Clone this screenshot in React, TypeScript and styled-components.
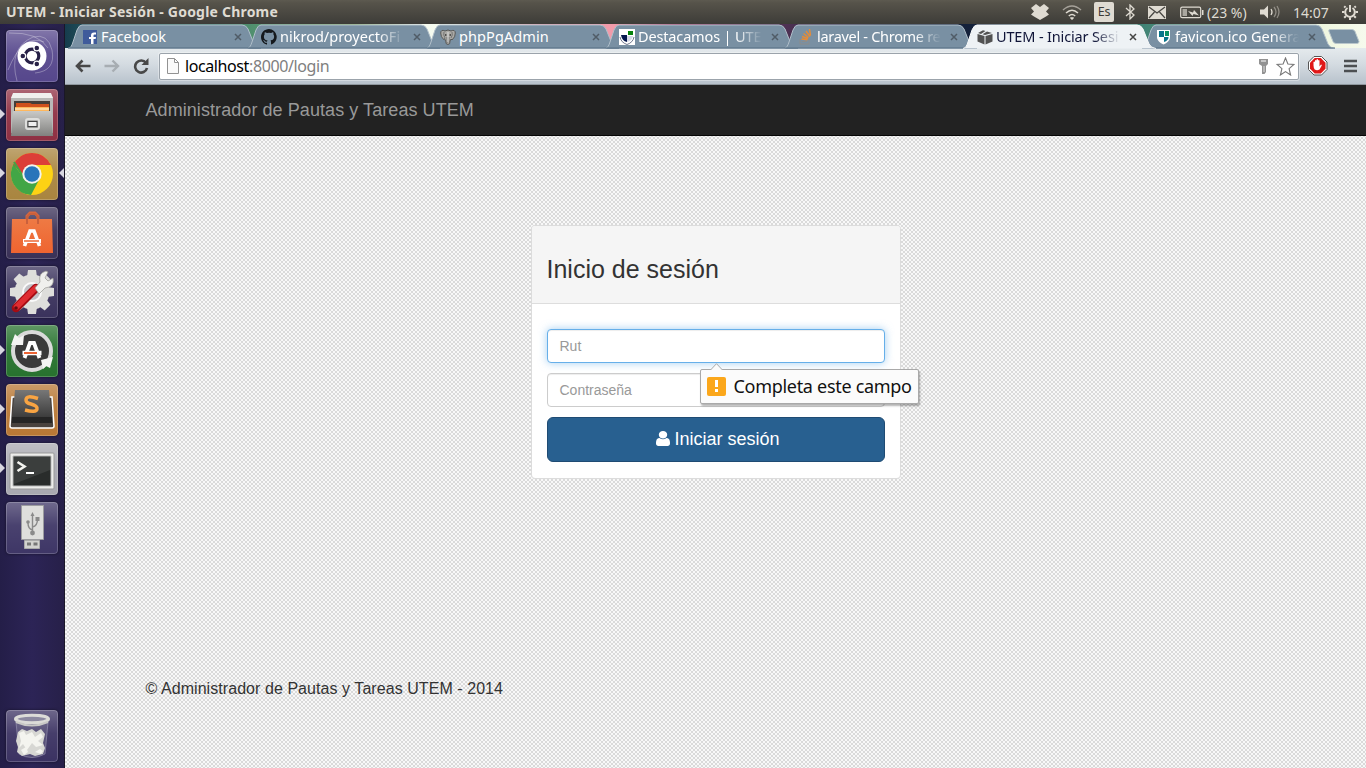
import React from "react";
import styled, { createGlobalStyle } from "styled-components";

const Global = createGlobalStyle`
  * { box-sizing: border-box; }
  html, body { margin: 0; padding: 0; overflow: hidden; }
  svg { display: block; flex: none; }
`;
const ubuntu = '"Noto Sans", "Open Sans", sans-serif';
const arial = '"Liberation Sans", Arial, sans-serif';

const Desktop = styled.div`
  width: 1366px; height: 768px; display: flex; flex-direction: column;
  font-family: ${ubuntu}; overflow: hidden;
`;
const TopBar = styled.header`
  height: 24px; flex: none; display: flex; align-items: center; justify-content: space-between;
  padding: 0 8px 0 6px; color: #dfdbd2;
  background: linear-gradient(#5d5a50, #56534a 12%, #3d3c38);
`;
const WindowTitle = styled.div`
  font-size: 14px; font-weight: 700; letter-spacing: 0.21px; line-height: 24px; white-space: nowrap;
`;
const Indicators = styled.div`
  display: flex; align-items: center; height: 24px; font-size: 14px;
`;
const Indicator = styled.div<{ $gap?: number; $w?: number }>`
  display: flex; align-items: center; margin-left: ${p => p.$gap ?? 0}px; width: ${p => p.$w ? p.$w + "px" : "auto"};
  white-space: nowrap;
`;
const Lang = styled.div`
  width: 20px; height: 20px; background: #dfdbd2; color: #3d3c38; border-radius: 2px;
  font-size: 12.5px; line-height: 20px; text-align: center; letter-spacing: -0.3px;
`;
const Workspace = styled.div`display: flex; flex: 1; min-height: 0;`;
const Launcher = styled.nav`
  width: 65px; flex: none; display: flex; flex-direction: column; align-items: center; gap: 7px;
  padding: 6px 1px 6px 0; border-right: 1px solid #1a1728;
  background: linear-gradient(90deg, #241e48, #2c2456 50%, #272049);
`;
const Tile = styled.div<{ $bg: string; $last?: boolean }>`
  position: relative; width: 52px; height: 52px; flex: none; border-radius: 4px;
  margin-top: ${p => (p.$last ? "auto" : "0")};
  background: linear-gradient(rgba(255,255,255,.26), rgba(255,255,255,.06) 45%, rgba(255,255,255,0)), ${p => p.$bg};
  box-shadow: inset 0 0 0 1px rgba(255,255,255,.2), 0 0 3px rgba(0,0,0,.5);
`;
const Pip = styled.i<{ $right?: boolean }>`
  position: absolute; top: 20px; ${p => (p.$right ? "right: -6px" : "left: -6px")};
  border: 5px solid transparent; border-width: 5px ${p => (p.$right ? "5px 5px 0" : "0 5px 5px")};
  ${p => (p.$right ? "border-right-color: #d8d6e0" : "border-left-color: #d8d6e0")};
`;
const Browser = styled.section`flex: 1; min-width: 0; display: flex; flex-direction: column;`;
const TabStrip = styled.div`
  height: 24px; flex: none; display: flex; padding-left: 3px;
  background: linear-gradient(90deg, #163c4d 0, #2a6264 40px, #3f7d6c 150px, #57966f 200px, #8fb070 290px, #f5fbf0 350px, #f6faef 390px, #e99dab 480px, #f29baa 550px, #b13b68 610px, #60375c 690px, #3d2b4b 750px, #152136 830px, #14213b 910px, #2e685e 1020px, #418376 1080px, #6fa76f 1180px, #eef6de 1250px, #f6faed 1301px);
`;
const TabBox = styled.div<{ $active?: boolean }>`
  position: relative; width: 193px; height: 24px; margin-right: -14px; flex: none; display: flex; align-items: center;
  z-index: ${p => (p.$active ? 2 : 1)}; padding: 2px 19px 0 14px;
`;
const TabShape = styled.svg`position: absolute; left: 0; top: 0; z-index: -1;`;
const TabLabel = styled.span<{ $active?: boolean; $fade?: boolean; $sp?: number }>`
  flex: 1; min-width: 0; margin: 0 9px 2px 3px; white-space: nowrap;
  font-size: 14.5px; line-height: 22px; letter-spacing: ${p => p.$sp ?? 0}px;
  color: ${p => (p.$active ? "#101538" : "#fff")};
  ${p => p.$fade ? "mask-image: linear-gradient(90deg, #000 calc(100% - 26px), transparent);" : ""}
`;
const NewTab = styled.div`display: flex; align-items: flex-start; margin: 5px 0 0 21px;
  margin-left: 7px;`;
const Toolbar = styled.div`
  height: 37px; flex: none; display: flex; align-items: center; padding: 0 9px 0 10px;
  background: linear-gradient(#e5eaed, #d4dbe1 45%, #b8c2cc); border-bottom: 1px solid #8f979e;
`;
const NavIcons = styled.div`display: flex; align-items: center; gap: 13px; width: 84px;`;
const Omnibox = styled.div`
  width: 1140px; height: 27px; display: flex; align-items: center; background: #fff;
  border: 1px solid #9ba3ab; border-radius: 2px; box-shadow: 0 0 0 1px rgba(255,255,255,.35);
  padding: 0 3px 0 7px; margin-right: 9px;
`;
const Url = styled.div`
  flex: 1; margin-left: 6px; font-size: 16px; letter-spacing: -0.4px; line-height: 24px; color: #808080; white-space: nowrap;
  b { font-weight: 400; color: #000; }
`;
const StarIcon = styled.svg`margin-left: 6px;`;
const MenuIcon = styled.svg`margin-left: 16px;`;
const Page = styled.main`
  flex: 1; font-family: ${arial}; display: flex; flex-direction: column; align-items: center;
  background: #ececec repeating-conic-gradient(#f8f8f8 0 25%, #dadada 0 50%) 0 0 / 4px 4px;
`;
const Navbar = styled.div`
  width: 100%; height: 51px; flex: none; background: #222; border-bottom: 1px solid #080808;
  padding-left: 80.5px; font-size: 18px; letter-spacing: 0.07px; line-height: 50px; color: #999;
`;
const Card = styled.div`
  width: 370px; height: 254px; margin-top: 89px; flex: none; background: #fff;
  border: 1px solid #dcdcdc; border-radius: 4px;
`;
const CardHead = styled.div`
  height: 78px; padding: 29px 15px 0; background: #f5f5f5; border-bottom: 1px solid #ddd; border-radius: 3px 3px 0 0;
`;
const Heading = styled.h3`margin: 0; font-size: 25px; line-height: 28px; font-weight: 400; color: #333;`;
const CardBody = styled.div`padding: 25px 15px 15px; display: flex; flex-direction: column; gap: 10px; position: relative;`;
const Field = styled.div<{ $focus?: boolean }>`
  height: 34px; padding: 0 12px; border-radius: 4px; background: #fff; font-size: 14px; line-height: 32px; color: #999;
  border: 1px solid ${p => (p.$focus ? "#66afe9" : "#ccc")};
  box-shadow: inset 0 1px 1px rgba(0,0,0,.075)${p => (p.$focus ? ", 0 0 8px rgba(102,175,233,.6)" : "")};
`;
const Submit = styled.div`
  height: 45px; border: 1px solid #1f4b73; border-radius: 6px; background: #286090; color: #fff;
  display: flex; align-items: center; justify-content: center; gap: 4px; font-size: 18px; line-height: 43px; padding-left: 5px;
`;
const UserIcon = styled.svg`margin-bottom: 2px;`;
const Bubble = styled.div`
  position: absolute; left: 168px; top: 65px; width: 219px; height: 35px; z-index: 4;
  display: flex; align-items: center; gap: 8px; padding: 0 7px 1px 6px; border: 1px solid #a9a9a9; border-radius: 2px;
  background: #fbfbfb; box-shadow: 1px 2px 2px rgba(0,0,0,.3);
  font-family: ${ubuntu}; font-size: 18px; letter-spacing: -0.3px; color: #111; white-space: nowrap;
`;
const BubbleTip = styled.svg`position: absolute; left: 9px; top: -7px;`;
const Warn = styled.div`
  width: 19px; height: 19px; flex: none; border-radius: 2px; background: #fba71b; display: flex; align-items: center; justify-content: center;
`;
const Footer = styled.footer`
  width: 100%; padding-left: 80.5px; margin-top: 199px; font-size: 16px; letter-spacing: 0.06px; line-height: 22px; color: #333;
`;

const Close = ({ active }: { active?: boolean }) => (
  <svg width="8" height="8" viewBox="0 0 8 8"><path d="M1 1l6 6M7 1L1 7" stroke={active ? "#444" : "#505c67"} strokeWidth="1.5" /></svg>
);
function Tab({ icon, label, active, fade, sp }: { icon: React.ReactNode; label: string; active?: boolean; fade?: boolean; sp?: number }) {
  return (
    <TabBox $active={active}>
      <TabShape width="193" height="25" viewBox="0 0 193 25">
        <path d="M0 24.500C3 24 4 21 5 18L9 6Q11 1 14 1H174Q178 1 180 5L186 20Q188 24 193 24.500Z" fill={active ? "#eef2f5" : "#7990a3"} />
        <path d="M0 24.500C3 24 4 21 5 18L9 6Q11 1 14 1H174Q178 1 180 5L186 20Q188 24 193 24.500" fill="none" stroke={active ? "#f7f9fa" : "#b1bfca"} />
        {!active && <path d="M0 24h193" stroke="#566f83" />}
      </TabShape>
      {icon}
      <TabLabel $active={active} $fade={fade} $sp={sp}>{label}</TabLabel>
      <Close active={active} />
    </TabBox>
  );
}

const FbIcon = () => <svg width="16" height="16" viewBox="0 0 16 16"><path fill="#3f5b9b" d="M1 1h14v14H1z" /><path fill="#fff" d="M9 15V10H7V8h2V6.500Q9 3.500 12 3.500h2v2h-1.500q-1 0-1 1V8H14l-.4 2h-2.100v5z" /></svg>;
const GhIcon = () => <svg width="16" height="16" viewBox="0 0 16 16"><path fill="#15191d" d="M8 0C3.580 0 0 3.580 0 8c0 3.540 2.290 6.530 5.470 7.590.4.070.55-.17.55-.38v-1.490C3.780 14.200 3.310 12.650 3.310 12.650c-.36-.92-.89-1.170-.89-1.170-.73-.49.05-.48.05-.48.8.06 1.230.83 1.230.83.72 1.230 1.890.87 2.340.67.07-.52.28-.87.51-1.080-1.780-.2-3.640-.89-3.640-3.960 0-.87.31-1.590.82-2.150-.08-.2-.36-1.020.08-2.120 0 0 .67-.21 2.200.82a7.600 7.600 0 0 1 4 0c1.530-1.030 2.200-.82 2.200-.82.44 1.100.16 1.920.08 2.120.51.56.82 1.280.82 2.150 0 3.080-1.870 3.760-3.650 3.960.29.25.54.73.54 1.480v2.200c0 .21.15.46.55.38A8 8 0 0 0 8 0z" /></svg>;
const PgIcon = () => <svg width="16" height="16" viewBox="0 0 16 16"><path fill="#aaa9a5" stroke="#50504f" strokeWidth=".9" d="M5 2Q1 0 .7 4q0 4 3 6.500l1-1 1 3q0 3 2.300 3t2-3.500l1-2 1 1Q15.500 8 15.300 4 15 0 11 2 8 0 5 2z" /><path stroke="#666" strokeWidth=".8" fill="none" d="M4 3q-1 3 1 6M12 3q1 3-1 6M7 8v6M9 8v5" /><path stroke="#ddd" d="M8 3v10" /><circle cx="5.800" cy="6" r=".7" /><circle cx="10.200" cy="6" r=".7" /></svg>;
const UtemShield = () => <svg width="16" height="16" viewBox="0 0 16 16"><path fill="#fff" d="M0 0h16v16H0z" /><path fill="#05174e" d="M2 6h6v7Q3 12 2 6z" /><path fill="#d5dae6" d="M8 7h6q-1 5-6 6z" /><path fill="#07820c" d="M9 2h5v4H9z" /><path d="M1 8q1 5.500 7 7.500 6-2 7-7.500" stroke="#4b5670" strokeWidth=".8" fill="none" /></svg>;
const SoIcon = () => <svg width="16" height="16" viewBox="0 0 16 16"><path d="M2 10v5h9v-5M4 12.500h5" fill="none" stroke="#8c8c8b" /><path d="M3.500 10l6 .8M4 7.500l6 2M5.500 4.500l5 4M8 2l4 5.500M11.500 0l1 6.500" stroke="#e88b34" strokeWidth="1.400" /></svg>;
const BoxIcon = () => <svg width="16" height="16" viewBox="0 0 16 16"><path fill="#525252" d="M.5 5l7 2v8.500l-7-3zM15.500 5l-7 2v8.500l7-3zM1 4l5-2.700 2.500.8L4 4.900zM5.500 5.200l4.500-2.700L15 4 8 6z" /></svg>;
const FavShield = () => <svg width="16" height="16" viewBox="0 0 16 16"><path fill="#fff" d="M1 1h13v8q-1 4-6.500 6.500Q2 13 1 9z" /><path fill="#08748b" d="M3 2h5v6H3zM8 8h4.500q0 3.500-4.500 5z" /><path fill="#0b9166" d="M9 2h4v5H9z" /></svg>;

const Id = {
  Ubuntu: () => <svg width="52" height="52" viewBox="0 0 52 52"><g fill="none" stroke="#fff" strokeOpacity=".3"><path d="M11 51Q2 18 27 7q15-4 19 13Q50 41 29 43M3 3q29-1 39 15" /><path d="M2 40Q17 3 38 12" /></g><circle cx="26" cy="26" r="14.500" fill="#fff" /><circle cx="26" cy="26" r="6.800" fill="none" stroke="#282147" strokeWidth="3.200" /><g fill="#282147" stroke="#fff" strokeWidth="1.300"><circle cx="16.800" cy="26" r="2.900" /><circle cx="30.800" cy="18" r="2.900" /><circle cx="30.800" cy="34" r="2.900" /></g></svg>,
  Files: () => <svg width="52" height="52" viewBox="0 0 52 52"><defs><linearGradient id="cab" x2="0" y2="1"><stop stopColor="#c9c9c7" /><stop offset="1" stopColor="#81817f" /></linearGradient></defs><path d="M8 4h36l3 5v35H5V9z" fill="#b9b9b7" /><path d="M7 4h38l2 5H5z" fill="#f0f0ee" /><path d="M8 12h36v11H8z" fill="#443d39" /><path d="M10 14h14l2 1h17v8H10z" fill="#cf501d" /><path d="M9 18h34v5H9z" fill="#ffb75c" /><path d="M9 20h34" stroke="#fff6de" /><path d="M7 22h38l2 25H5z" fill="url(#cab)" /><rect x="20" y="30" width="13" height="10" rx="2" fill="none" stroke="#dededc" strokeWidth="2" /><rect x="22" y="32.500" width="9" height="5" fill="#eee" stroke="#444" /></svg>,
  Chrome: () => <svg width="52" height="52" viewBox="0 0 52 52"><circle cx="26" cy="26" r="21" fill="#fdd214" /><path d="M7 17A21 21 0 0 1 45 17H26q-7 0-9 9z" fill="#dc3e38" /><path d="M7.500 16A21 21 0 0 0 25 47l9-17q-8 9-15 2z" fill="#42a646" /><path d="M8 14L18 30" stroke="#42a646" strokeWidth="2" /><circle cx="26" cy="26" r="9.700" fill="#f3f3ed" /><circle cx="26" cy="26" r="7.700" fill="#2875ba" /></svg>,
  Store: () => <svg width="52" height="52" viewBox="0 0 52 52"><defs><linearGradient id="bag" x2="0" y2="1"><stop stopColor="#ee7a44" /><stop offset="1" stopColor="#ef6430" /></linearGradient></defs><path d="M21 17V9l3-3h5l3 3v8" fill="none" stroke="#d8673f" strokeWidth="3" /><path d="M6 12h40l1 34H5z" fill="url(#bag)" /><path d="M21 17V10l3-3h5l3 3v7" stroke="#c9603c" strokeWidth="2" fill="none" /><path d="M18.500 39l5.500-15h4l5.500 15" stroke="#fff" strokeWidth="3.600" fill="none" /><path d="M17 34h18" stroke="#fff" strokeWidth="4" /><path d="M18 34h15" stroke="#ed6935" strokeWidth="1.500" /></svg>,
  Settings: () => <svg width="52" height="52" viewBox="0 0 52 52"><g fill="#dededb"><circle cx="26" cy="26" r="17.500" />{[0,45,90,135,180,225,270,315].map(a => <path key={a} transform={`rotate(${a} 26 26)`} d="M21 11l1-7h8l1 7z" />)}</g><circle cx="26" cy="26" r="9" fill="#c2c2c7" stroke="#fafafa" strokeWidth="2" /><path d="M10 42L30 22" stroke="#a50c13" strokeWidth="8.500" strokeLinecap="round" /><path d="M10.500 41L29.500 22" stroke="#df2c31" strokeWidth="5.500" strokeLinecap="round" /><path d="M29 22l5-6q-2-9 6-11l2 1-3 6 3 3 5-3q2 9-8 10l-6 6z" fill="#f0f0ed" stroke="#969691" strokeWidth=".7" /><circle cx="10" cy="42" r="1.800" fill="#650b11" /></svg>,
  Updater: () => <svg width="52" height="52" viewBox="0 0 52 52"><circle cx="26" cy="26" r="19" fill="#3a3a3a" stroke="#dadada" strokeWidth="4" /><path d="M5 20L9 9l4 4 5-3-1 10z" fill="#f4f4f3" /><path d="M35 35l12-3-3 11-4-2-3 3z" fill="#f4f4f3" /><path d="M18.500 33l5.500-15h4l5.500 15" fill="none" stroke="#fff" strokeWidth="3.800" /><path d="M16.500 28h19" stroke="#fff" strokeWidth="4.500" /><path d="M18 28h13" stroke="#ed6535" strokeWidth="2" /></svg>,
  Sublime: () => <svg width="52" height="52" viewBox="0 0 52 52"><defs><linearGradient id="sub" x2="0" y2="1"><stop stopColor="#777" /><stop offset="1" stopColor="#343434" /></linearGradient></defs><path d="M6 13h40l2 29q0 2-2 2H6q-2 0-2-2z" fill="#49423e" stroke="#fff" strokeWidth="1.500" /><path d="M9 6h34l3 31H6z" fill="url(#sub)" /><path d="M6 33h40v6H6z" fill="#252525" /><path d="M32 14.500q-12-4-12 1.500 0 3 5 4 7 2 6 5-1 4-12 1" fill="none" stroke="#f8a443" strokeWidth="3.500" /></svg>,
  Terminal: () => <svg width="52" height="52" viewBox="0 0 52 52"><rect x="4" y="10" width="44" height="36" rx="1" fill="#ededeb" stroke="#999" /><path d="M7 13h38v30H7z" fill="#292c2b" stroke="#bbb" /><path d="M8 14h36v13L8 41z" fill="#484b4a" opacity=".6" /><path d="M11.500 19l7 4.500-7 4.500" stroke="#f4f4f0" strokeWidth="2.600" fill="none" /><path d="M20 30h8" stroke="#fff" strokeWidth="2" /></svg>,
  Usb: () => <svg width="52" height="52" viewBox="0 0 52 52"><path d="M15.500 3.500h22v34h-22z" fill="#dededc" stroke="#9c9c9f" /><path d="M18.500 38.500h15v8h-15z" fill="#d2d2cf" stroke="#aaa" /><path d="M21 40.500h4v3h-4zm6.500 0h4v3h-4z" fill="#777" /><g fill="none" stroke="#8a8a8a" strokeWidth="1.400"><path d="M26.500 13v17M26.500 28q-4.500-1-4.500-7M26.500 25q5-1 5-8" /></g><g fill="#8a8a8a"><circle cx="26.500" cy="31" r="2.400" /><path d="M24.500 14l2-4 2 4zM29.500 15h4v4h-4z" /><circle cx="22" cy="20" r="1.800" /></g></svg>,
  Trash: () => <svg width="52" height="52" viewBox="0 0 52 52"><path d="M10 10h32l-3 34q-13 7-26 0z" fill="#b8b8c1" opacity=".18" /><path d="M10 12l3 32q13 7 26 0l3-32" fill="none" stroke="#a5a1bd" strokeWidth=".8" opacity=".7" /><path d="M12 22l4-3 5 2 5-2 4 3 5-3 4 5-2 9 2 5-2 6-8 2-5-2-8 2-5-4 1-5-2-6z" fill="#d7d7d3" /><path d="M13 23l5-2 2 4 6-3 3 5 6-4 2 4-5 4 5 4-7 2-4-4-5 7-4-6-4 4 2-7zM15 40l5-3 2 5-4 3zM29 42l5-3 3 2-2 3z" fill="#f4f4ef" /><ellipse cx="26" cy="9" rx="16.500" ry="3.800" fill="#8c89a0" stroke="#dcdcd8" strokeWidth="3" /><path d="M10 12q16 7 32 0" fill="none" stroke="#c9c9c6" strokeWidth="2" /></svg>,
};

const apps = [
  { I: Id.Ubuntu, bg: "#56478c" }, { I: Id.Files, bg: "#8f3043", l: true }, { I: Id.Chrome, bg: "#a9853f", l: true, r: true },
  { I: Id.Store, bg: "#3a3157" }, { I: Id.Settings, bg: "#3a325c" }, { I: Id.Updater, bg: "#27722e", l: true },
  { I: Id.Sublime, bg: "#b97835", l: true }, { I: Id.Terminal, bg: "#a9a9b1", l: true }, { I: Id.Usb, bg: "#3e3666" }, { I: Id.Trash, bg: "#3b3262", last: true },
];

export default function App() {
  return (
    <Desktop>
      <Global />
      <TopBar>
        <WindowTitle>UTEM - Iniciar Sesión - Google Chrome</WindowTitle>
        <Indicators>
          <Indicator><svg width="18" height="16" viewBox="0 0 18 16" fill="#dfdbd2"><path d="M5 0l4 3 4-3 5 4-3 3.500 3 3-3 2L9 16l-6-3.500-3-2 3-3L0 4z" /></svg></Indicator>
          <Indicator $gap={13}><svg width="20" height="16" viewBox="0 0 20 16" fill="none" stroke="#dfdbd2" strokeWidth="1.500"><path d="M1 6q9-8 18 0" opacity=".6" /><path d="M4 9q6-5.500 12 0M6.800 12q3.200-3 6.400 0" /><path d="M8.500 13.500L10 15l1.500-1.500" fill="#dfdbd2" /></svg></Indicator>
          <Indicator $gap={12}><Lang>Es</Lang></Indicator>
          <Indicator $gap={11}><svg width="10" height="16" viewBox="0 0 10 16" fill="none" stroke="#dfdbd2" strokeWidth="1.300"><path d="M1 4l8 7-4 4V1l4 4-8 7" /></svg></Indicator>
          <Indicator $gap={13}><svg width="18" height="13" viewBox="0 0 18 13"><path fill="#dfdbd2" d="M0 0h18v13H0z" /><path d="M1 1l8 6 8-6M1 12l5.500-6M17 12l-5.500-6" stroke="#464540" fill="none" strokeWidth="1.200" /></svg></Indicator>
          <Indicator $gap={14}><svg width="24" height="13" viewBox="0 0 24 13"><rect x=".7" y="1.200" width="20" height="10.500" rx="1.500" fill="none" stroke="#dfdbd2" strokeWidth="1.200" /><path d="M2.500 3h4.500v7H2.500z" fill="#aaa79f" /><path d="M22 4h1.500v5H22M8 5l5 1.500 1-2.500 5 5.500-5.500-1.500-1 2z" fill="#dfdbd2" /></svg></Indicator>
          <Indicator $gap={3} $w={42}>(23 %)</Indicator>
          <Indicator $gap={11}><svg width="21" height="14" viewBox="0 0 21 14" fill="none" stroke="#dfdbd2" strokeWidth="1.300"><path d="M0 4.500h4l4-4v13l-4-4H0z" fill="#dfdbd2" stroke="none" /><path d="M11 4q2 3 0 6" /><path d="M14 2q4 5 0 10M17 1q4 6 0 12" opacity=".45" /></svg></Indicator>
          <Indicator $gap={12} $w={36}>14:07</Indicator>
          <Indicator $gap={13}><svg width="16" height="16" viewBox="0 0 16 16" fill="none" stroke="#dfdbd2"><path d="M5.500 4a4.800 4.800 0 1 0 5 0M8 1v7" strokeWidth="2" /><path d="M3.500 3.500L2.200 2.200M12.500 3.500l1.300-1.300M2.500 8H0M16 8h-2.500M4 12l-1.800 1.800M12 12l1.800 1.800M8 13.500V16" strokeWidth="2" /></svg></Indicator>
        </Indicators>
      </TopBar>
      <Workspace>
        <Launcher>
          {apps.map((a, i) => <Tile key={i} $bg={a.bg} $last={a.last}><a.I />{a.l && <Pip />}{a.r && <Pip $right />}</Tile>)}
        </Launcher>
        <Browser>
          <TabStrip>
            <Tab icon={<FbIcon />} label="Facebook" />
            <Tab icon={<GhIcon />} label="nikrod/proyectoFi" fade sp={0} />
            <Tab icon={<PgIcon />} label="phpPgAdmin" sp={0.1} />
            <Tab icon={<UtemShield />} label="Destacamos | UTE" fade sp={-0.15} />
            <Tab icon={<SoIcon />} label="laravel - Chrome re" fade sp={-0.3} />
            <Tab icon={<BoxIcon />} label="UTEM - Iniciar Sesi" fade active sp={-0.15} />
            <Tab icon={<FavShield />} label="favicon.ico Genera" fade sp={0} />
            <NewTab><svg width="32" height="15" viewBox="0 0 32 15"><path d="M2 .500h22q2 0 3 2l4 10q0 2-2 2H8q-2 0-3-2L.8 2Q.5.500 2 .500z" fill="#7990a3" stroke="#b9c6cb" /></svg></NewTab>
          </TabStrip>
          <Toolbar>
            <NavIcons>
              <svg width="16" height="14" viewBox="0 0 16 14"><path d="M15.500 7H2M7.500 1.500L2 7l5.500 5.500" fill="none" stroke="#484848" strokeWidth="2.600" /></svg>
              <svg width="16" height="14" viewBox="0 0 16 14"><path d="M.5 7H14M8.500 1.500L14 7l-5.500 5.500" fill="none" stroke="#a7adb2" strokeWidth="2.400" /></svg>
              <svg width="16" height="16" viewBox="0 0 16 16"><path d="M13 5A6 6 0 1 0 14 10" fill="none" stroke="#484848" strokeWidth="2.600" /><path d="M15.500 0v7H8.500z" fill="#484848" /></svg>
            </NavIcons>
            <Omnibox>
              <svg width="12" height="16" viewBox="0 0 12 16"><path d="M.5.500h7l4 4v11H.500zM7.500.500v4h4" fill="#fafafa" stroke="#929292" /></svg>
              <Url><b>localhost</b>:8000/login</Url>
              <svg width="11" height="15" viewBox="0 0 11 15"><path d="M1 0h9v5L8 7v6l-1.500 2H4V7L1 5z" fill="#929292" /><path d="M3 2h5" stroke="#fff" /><path d="M6 7v6" stroke="#ddd" /></svg>
              <StarIcon width="20" height="19" viewBox="0 0 20 19"><path d="M10.500 1l2.400 6 6 .5-4.800 4.200 1.500 6.300-5.100-3.400L5.400 18l1.500-6.300L2.100 7.500l6-.5z" fill="#fff" stroke="#777" strokeWidth="1.100" /></StarIcon>
            </Omnibox>
            <svg width="20" height="20" viewBox="0 0 20 20"><path d="M6 .5h7.500L19 6v7.500L13.500 19H6L.5 13.500V6z" fill="#fff" stroke="#555" /><path d="M6.700 2h6.100l4.700 4.700v6.100l-4.700 4.700H6.700L2 12.800V6.700z" fill="#e01919" /><path d="M5.500 9.500V6q.8-1 1.500 0v2.500-4q.8-1 1.500 0v3.500-4.500q.8-1 1.500 0V8.500v-4q.8-1 1.500 0v6l1.500-2q1.500 0 .5 1.500L11.500 13.500q-2.500 1.500-4.800 0-1.200-2-1.200-4z" fill="#fff" /></svg>
            <MenuIcon width="13" height="14" viewBox="0 0 13 14"><path d="M0 2h13M0 7h13M0 12h13" stroke="#4c4f52" strokeWidth="2.700" /></MenuIcon>
          </Toolbar>
          <Page>
            <Navbar>Administrador de Pautas y Tareas UTEM</Navbar>
            <Card>
              <CardHead><Heading>Inicio de sesión</Heading></CardHead>
              <CardBody>
                <Field $focus>Rut</Field>
                <Field>Contraseña</Field>
                <Submit>
                  <UserIcon width="14" height="15" viewBox="0 128 1280 1536" preserveAspectRatio="none"><path fill="#fff" d="M1280 1399q0 109-62.500 187t-150.500 78h-854q-88 0-150.500-78t-62.500-187q0-85 8.500-160.500t31.500-152 58.500-131 94-89 134.500-34.500q131 128 313 128t313-128q76 0 134.500 34.500t94 89 58.500 131 31.500 152 8.500 160.500zM1024 512q0 159-112.500 271.500t-271.500 112.500-271.500-112.500-112.500-271.500 112.500-271.500 271.500-112.500 271.500 112.500 112.500 271.500z" /></UserIcon>
                  <span>Iniciar sesión</span>
                </Submit>
                <Bubble>
                  <BubbleTip width="13" height="8" viewBox="0 0 13 8"><path d="M.5 7L6.500.7l6 6.300v1H.500z" fill="#fbfbfb" /><path d="M.5 7L6.500.7l6 6.300" fill="none" stroke="#a9a9a9" /></BubbleTip>
                  <Warn><svg width="3" height="12" viewBox="0 0 3 12"><path d="M0 0h3v7H0zM0 9h3v3H0z" fill="#fff" /></svg></Warn>
                  <span>Completa este campo</span>
                </Bubble>
              </CardBody>
            </Card>
            <Footer>© Administrador de Pautas y Tareas UTEM - 2014</Footer>
          </Page>
        </Browser>
      </Workspace>
    </Desktop>
  );
}
